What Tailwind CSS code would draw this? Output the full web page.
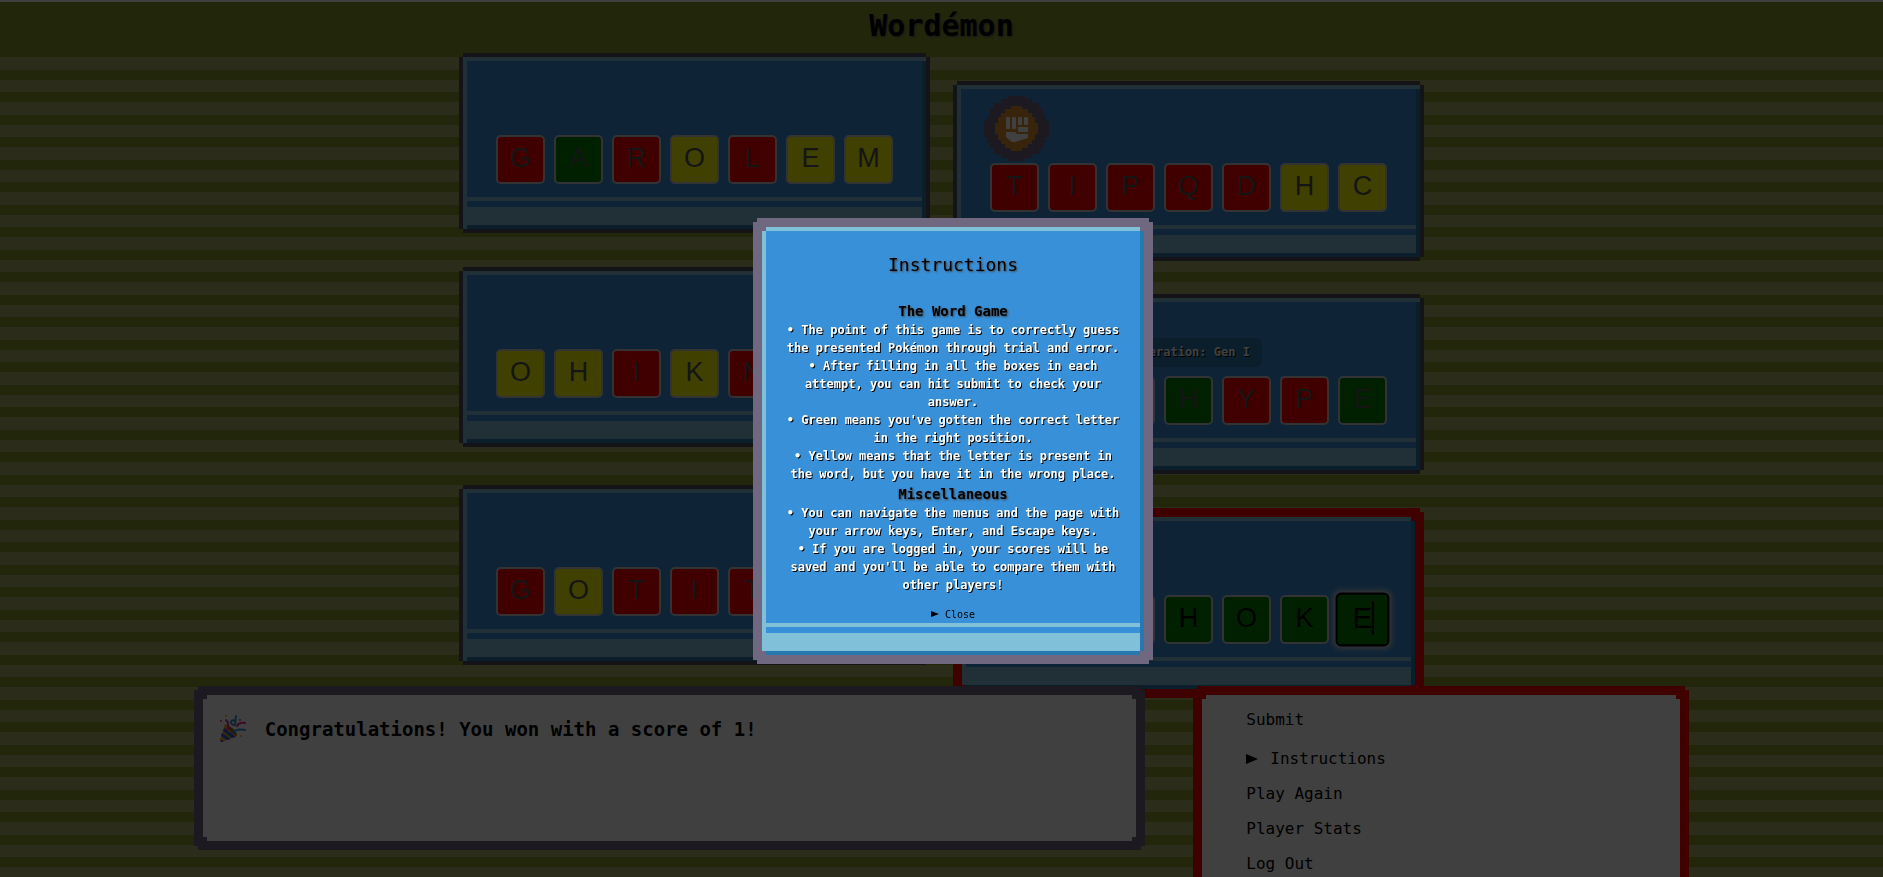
<!DOCTYPE html>
<html lang="en">
<head>
<meta charset="utf-8">
<title>Wordémon</title>
<script src="https://cdn.jsdelivr.net/npm/@tailwindcss/browser@4"></script>
</head>
<body class="h-screen overflow-hidden bg-[#88982c] font-['DejaVu_Sans_Mono',monospace] text-black">
<div class="min-h-screen border-t-2 border-[#fff]">
  <header class="flex h-[55px] items-start justify-center pt-2">
    <h1 class="text-[30px] leading-8 font-bold [text-shadow:1px_1px_2px_#555]">Wordémon</h1>
  </header>
  <main class="min-h-screen bg-[repeating-linear-gradient(to_bottom,#b0b06c_0px,#b0b06c_13px,#88982c_13px,#88982c_23px,#b0b06c_23px,#b0b06c_35px,#88982c_35px,#88982c_45px)]">
    <div id="board" class="flex justify-center gap-[31px]">
      <section class="flex w-[463px] flex-col gap-[41px]" data-rows="0,2,4"></section>
      <section class="mt-7 flex w-[463px] flex-col gap-[41px]" data-rows="1,3,5"></section>
    </div>
    <div class="relative mx-auto -mt-1 flex w-[79%] items-start gap-14">
      <section class="flex-1 bg-[#706880] p-[9px] shadow-[0_-4px_#706880,0_4px_#706880,-4px_0_#706880,4px_0_#706880]">
        <div class="flex h-[138px] items-start gap-[18px] bg-white px-3 pt-4 shadow-[0_-4px_#fff,0_4px_#fff,-4px_0_#fff,4px_0_#fff]">
          <svg class="h-7 w-7 shrink-0" viewBox="0 0 28 28" aria-hidden="true"><path d="M6 9 1 25q0 2 2 2l15-6Q16 12 6 9z" fill="#f9a52c"/><path d="M5 13l12 9-4 1L4 16zM3 18l9 6-4 1-6-4zM1 24l4 3-3 0z" fill="#2f5cd8"/><path d="M7 10q3 6 11 11-1-7-11-11z" fill="#8a5a10"/><g fill="none" stroke-width="2" stroke-linecap="round"><path d="M7 5q4 4 1 10M18 11q2-4 8-3" stroke="#e0309c"/><path d="M17 1l-1 9q-4 0-4-3 1-3 4-1M13 18q5-5 13-3" stroke="#2f9ad8"/></g><g fill="#e0309c"><circle cx="2" cy="6" r="1"/><circle cx="21" cy="5" r="1"/></g><g fill="#f9a52c"><circle cx="7" cy="1" r="1"/><circle cx="22" cy="21" r="1"/></g></svg>
          <p class="text-[19px] leading-7 font-bold">Congratulations! You won with a score of 1!</p>
        </div>
      </section>
      <nav class="w-[488px] bg-[#f00] p-[9px] shadow-[0_-4px_#f00,0_4px_#f00,-4px_0_#f00,4px_0_#f00]">
        <div class="flex h-60 flex-col items-start bg-white px-10 pt-[3px] text-base shadow-[0_-4px_#fff,0_4px_#fff,-4px_0_#fff,4px_0_#fff]">
          <button class="h-[35px]">Submit</button>
          <button class="mt-1 flex h-[35px] items-center gap-3"><svg class="h-3 w-3" viewBox="0 0 12 12" aria-hidden="true"><path d="M0 1l12 5-12 5z"/></svg>Instructions</button>
          <button class="h-[35px]">Play Again</button>
          <button class="h-[35px]">Player Stats</button>
          <button class="h-[35px]">Log Out</button>
        </div>
      </nav>
    </div>
  </main>
</div>

<div class="fixed inset-0 flex items-center justify-center bg-black/75 pt-[5px] pl-[23px]">
  <div role="dialog" aria-labelledby="dlg" class="w-[392px] bg-[#706880] p-[9px] shadow-[0_-4px_#706880,0_4px_#706880,-4px_0_#706880,4px_0_#706880]">
    <div class="bg-[#3890d8] text-center shadow-[0_-4px_#80c0d8,-4px_0_#80c0d8,4px_0_#2878b0,0_4px_#2878b0]">
      <div class="px-5 pt-5">
        <h2 id="dlg" class="mb-[22px] text-lg leading-7 [text-shadow:1px_1px_2px_#444]">Instructions</h2>
        <h3 class="text-sm leading-5 font-bold [text-shadow:1px_1px_2px_#444]">The Word Game</h3>
        <div class="text-xs leading-[18px] font-bold text-white [text-shadow:1px_1px_0_#000]">
          <p>• The point of this game is to correctly guess the presented Pokémon through trial and error.</p>
          <p>• After filling in all the boxes in each attempt, you can hit submit to check your answer.</p>
          <p>• Green means you've gotten the correct letter in the right position.</p>
          <p>• Yellow means that the letter is present in the word, but you have it in the wrong place.</p>
        </div>
        <h3 class="mt-px text-sm leading-5 font-bold [text-shadow:1px_1px_2px_#444]">Miscellaneous</h3>
        <div class="text-xs leading-[18px] font-bold text-white [text-shadow:1px_1px_0_#000]">
          <p>• You can navigate the menus and the page with your arrow keys, Enter, and Escape keys.</p>
          <p>• If you are logged in, your scores will be saved and you'll be able to compare them with other players!</p>
        </div>
        <button class="mx-auto mt-[11px] flex h-[18px] items-center gap-[6px] text-[10px]"><svg class="h-2 w-2" viewBox="0 0 8 8" aria-hidden="true"><path d="M0 1l8 3-8 3z"/></svg>Close</button>
      </div>
      <div class="h-1 bg-[#80c0d8]"></div>
      <div class="mt-[6px] h-[18px] bg-[#80c0d8]"></div>
    </div>
  </div>
</div>

<script>
const rows = [
  ["GAROLEM", "rgryryy"],
  ["TIPQDHC", "rrrrryy"],
  ["OHIKN  ", "yyryrrr"],
  ["   HYPE", "rrrgrrg"],
  ["GOTIT  ", "ryrrrrr"],
  ["   HOKE", "ggggggg"]
];
const fill = { r: "bg-[#f00]", g: "bg-[#008000]", y: "bg-[#ff0]" };
const fist = `<svg class="h-[65px] w-[65px]" viewBox="0 0 65 65" aria-hidden="true"><path fill="#706880" shape-rendering="crispEdges" d="M24 0h17v3h7v4h7v6h4v6h3v6h3v16h-3v6h-3v6h-4v5h-7v4h-7v3H24v-3h-7v-4h-7v-5H6v-6H3v-6H0V25h3v-6h3v-6h4V7h7V3h7z"/><path fill="#e09028" shape-rendering="crispEdges" d="M27 10h11v3h6v4h4v4h3v6h3v11h-3v6h-3v4h-4v4h-6v3H27v-3h-6v-4h-4v-4h-3v-6h-3V27h3v-6h3v-4h4v-4h6z"/><g fill="#fff"><rect x="22" y="21" width="4" height="12" rx="1"/><rect x="28" y="21" width="4" height="12" rx="1"/><rect x="34" y="21" width="4" height="8" rx="1"/><rect x="40" y="21" width="4" height="8" rx="1"/><rect x="34" y="31" width="10" height="5" rx="1"/><path d="M22 36h9l2 2h11v4l-13 4h-3l-6-5z"/></g></svg>`;
const cell = (i, n, ch, k) => {
  const last = i === 5, focus = last && n === 6;
  const input = `<input aria-label="Row ${i + 1} letter ${n + 1}" maxlength="1" value="${ch.trim()}" class="block h-[49px] w-[49px] rounded-[5px] border-2 pb-[2px] text-center font-['Liberation_Sans',sans-serif] text-[27px] ${fill[k]} ${last ? "text-black" : "text-[#545454]"} ${focus ? "border-black shadow-[0_0_5px_2px_#ccc] outline-none" : "border-[#ccc]"} ">`;
  return focus ? `<div class="relative scale-110">${input}<span class="absolute top-2 left-[33px] h-[30px] w-[2px] bg-black"></span></div>` : input;
};
const card = i => {
  const [w, c] = rows[i];
  const cells = [...w].map((ch, n) => cell(i, n, ch, c[n])).join("");
  const hint = i === 1 ? `<div class="w-[397px] pb-[2px]"><div class="-ml-[6px]">${fist}</div></div>`
    : i === 3 ? `<p class="mb-[9px] rounded-md bg-[#2878b0] px-3 py-[5px] text-xs leading-[19px] font-bold text-white [text-shadow:1px_1px_0_#000]">Generation: Gen I</p>` : "";
  const body = `<div class="flex h-[136px] flex-col items-center justify-end pb-[13px]">${hint}<div class="flex gap-[9px]">${cells}</div></div><div class="h-1 bg-[#80c0d8]"></div><div class="mt-[6px] h-[18px] bg-[#80c0d8]"></div>`;
  return i === 5
    ? `<div class="mt-px bg-[#f00] p-[9px] shadow-[0_-4px_#f00,0_4px_#f00,-4px_0_#f00,4px_0_#f00]"><div class="bg-[#3890d8] shadow-[0_-4px_#80c0d8,-4px_0_#80c0d8,4px_0_#2878b0,0_4px_#2878b0]">${body}</div></div>`
    : `<div class="shadow-[0_-4px_#504c60,0_4px_#504c60,-4px_0_#504c60,4px_0_#504c60] ${i === 2 ? "mt-px" : ""} ${i === 4 ? "mt-[5px]" : ""} "><div class="border-t-4 border-l-4 border-[#80c0d8] bg-[#2878b0] pr-1 pb-1"><div class="bg-[#3890d8]">${body}</div></div></div>`;
};
document.querySelectorAll("[data-rows]").forEach(s => { s.innerHTML = s.dataset.rows.split(",").map(i => card(+i)).join(""); });
</script>
</body>
</html>
